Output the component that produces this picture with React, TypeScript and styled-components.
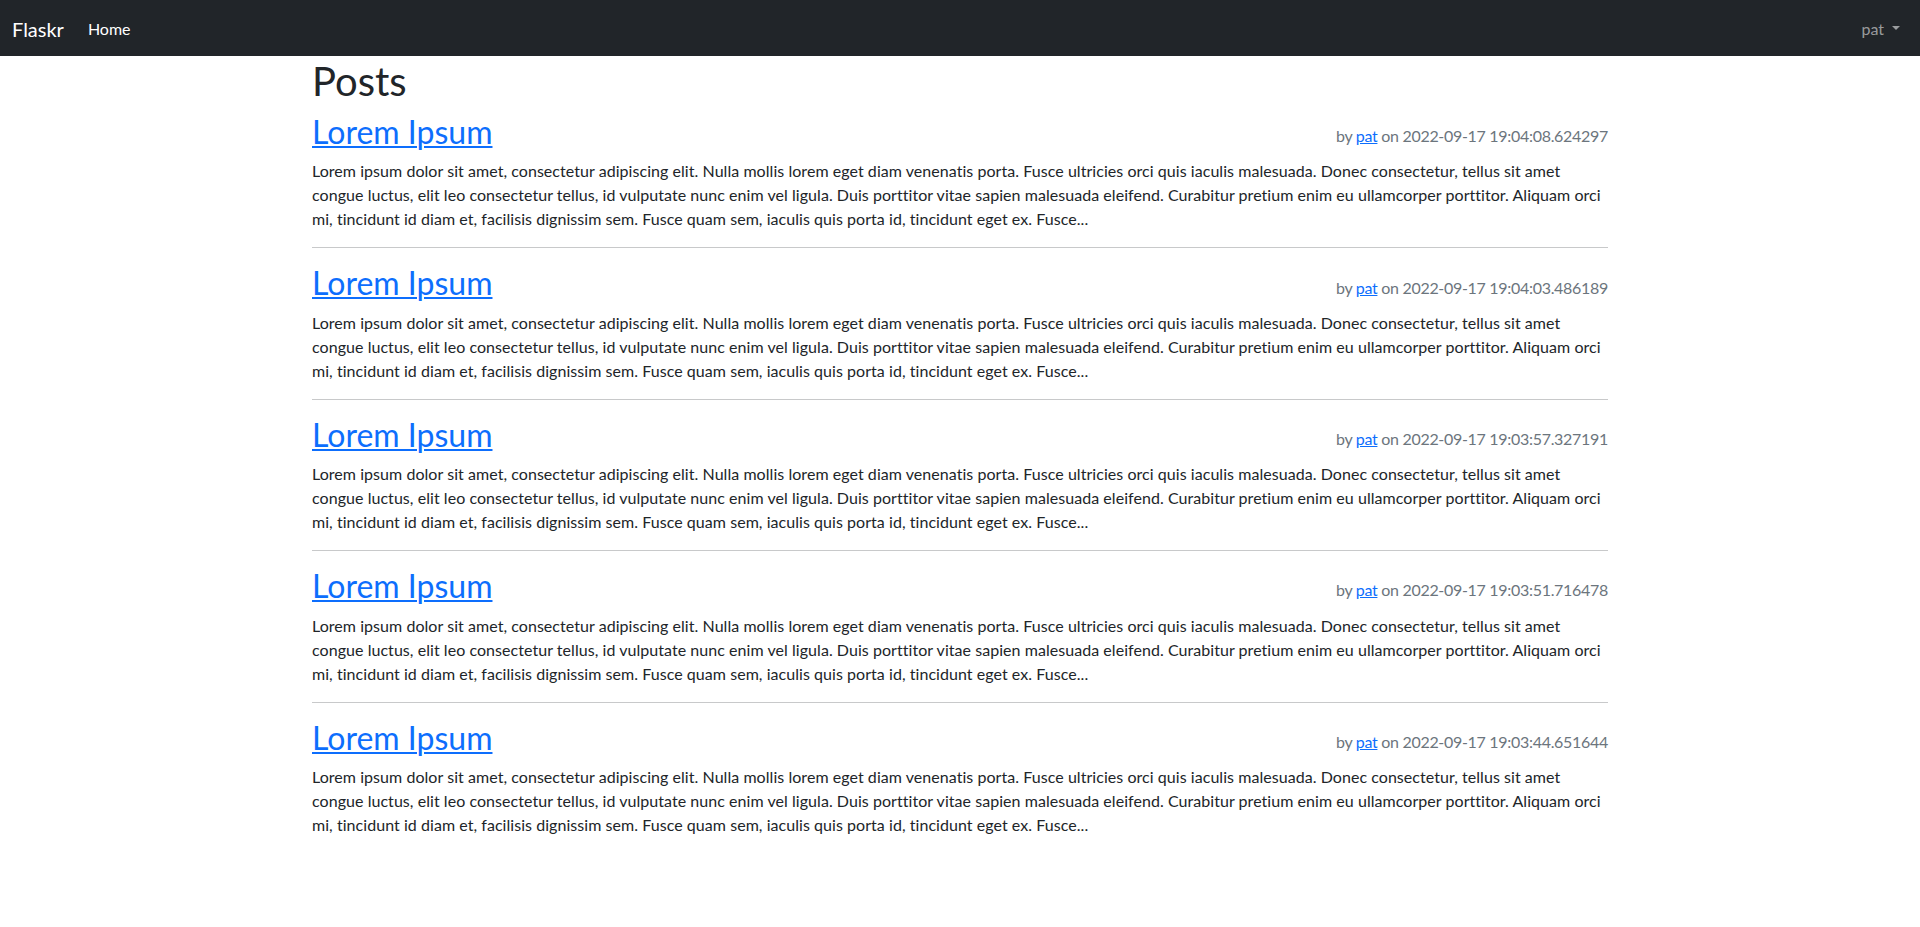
import React from "react";
import styled, { createGlobalStyle } from "styled-components";

const GlobalStyle = createGlobalStyle`
  *, *::before, *::after { box-sizing: border-box; }
  body {
    margin: 0;
    font-family: Lato, "Segoe UI", "Noto Sans", sans-serif;
    font-size: 16px;
    line-height: 1.5;
    color: #212529;
    background: #fff;
  }
`;

const Navbar = styled.nav`
  background: #212529;
  padding: 8px 0;
`;

const NavInner = styled.div`
  display: flex;
  align-items: center;
  justify-content: space-between;
  padding: 0 12px;
`;

const NavLeft = styled.div`
  display: flex;
  align-items: center;
`;

const Brand = styled.a`
  color: #fff;
  font-size: 20px;
  line-height: 30px;
  padding: 6px 0 4px;
  margin-right: 16px;
  text-decoration: none;
`;

const NavLink = styled.a<{ $muted?: boolean }>`
  color: ${(p) => (p.$muted ? "rgba(255,255,255,0.55)" : "#fff")};
  padding: 9px 8px 7px;
  line-height: 24px;
  text-decoration: none;
  display: flex;
  align-items: center;
`;

const Caret = styled.span`
  display: inline-block;
  margin-left: 8px;
  margin-top: -2px;
  border-top: 4.8px solid currentColor;
  border-left: 4.8px solid transparent;
  border-right: 4.8px solid transparent;
  border-bottom: 0;
`;

const Container = styled.main`
  max-width: 1320px;
  margin: 0 auto;
  padding: 1px 12px 0;
`;

const PageTitle = styled.h1`
  font-size: 40px;
  font-weight: 400;
  line-height: 1.2;
  margin: 0 0 8px;
`;

const PostHeader = styled.header`
  display: flex;
  justify-content: space-between;
  align-items: center;
`;

const PostTitle = styled.h2`
  font-size: 32px;
  font-weight: 400;
  line-height: 1.2;
  margin: 0 0 8px;

  a {
    color: #0d6efd;
    text-decoration: underline;
    text-underline-offset: 2px;
    text-decoration-thickness: 2px;
  }
`;

const Meta = styled.div`
  color: #6c757d;
  letter-spacing: -0.3px;

  a {
    color: #0d6efd;
    text-decoration: underline;
  }
`;

const Body = styled.p`
  margin: 0 0 16px;
  letter-spacing: 0.05px;
`;

const Rule = styled.hr`
  margin: 16px 0;
  border: 0;
  border-top: 1px solid #c8c9ca;
`;

const BODY =
  "Lorem ipsum dolor sit amet, consectetur adipiscing elit. Nulla mollis lorem eget diam venenatis porta. Fusce ultricies orci quis iaculis malesuada. Donec consectetur, tellus sit amet congue luctus, elit leo consectetur tellus, id vulputate nunc enim vel ligula. Duis porttitor vitae sapien malesuada eleifend. Curabitur pretium enim eu ullamcorper porttitor. Aliquam orci mi, tincidunt id diam et, facilisis dignissim sem. Fusce quam sem, iaculis quis porta id, tincidunt eget ex. Fusce...";

const posts = [
  "2022-09-17 19:04:08.624297",
  "2022-09-17 19:04:03.486189",
  "2022-09-17 19:03:57.327191",
  "2022-09-17 19:03:51.716478",
  "2022-09-17 19:03:44.651644",
];

export default function App() {
  return (
    <>
      <GlobalStyle />
      <Navbar>
        <NavInner>
          <NavLeft>
            <Brand href="#">Flaskr</Brand>
            <NavLink href="#">Home</NavLink>
          </NavLeft>
          <NavLink href="#" $muted>
            pat
            <Caret />
          </NavLink>
        </NavInner>
      </Navbar>
      <Container>
        <PageTitle>Posts</PageTitle>
        {posts.map((date, i) => (
          <article key={date}>
            <PostHeader>
              <PostTitle>
                <a href="#">Lorem Ipsum</a>
              </PostTitle>
              <Meta>
                by <a href="#">pat</a> on {date}
              </Meta>
            </PostHeader>
            <Body>{BODY}</Body>
            {i < posts.length - 1 && <Rule />}
          </article>
        ))}
      </Container>
    </>
  );
}
